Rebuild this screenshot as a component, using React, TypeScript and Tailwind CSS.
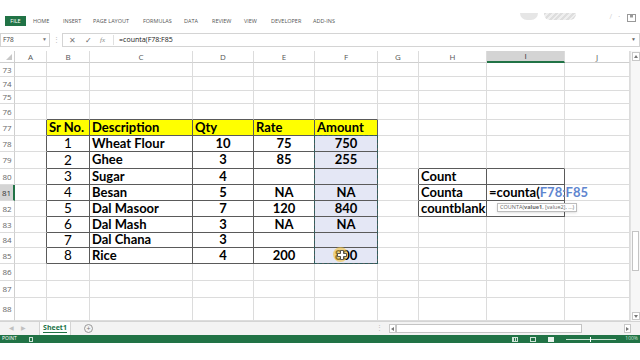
import React from "react"

const COLS = ["A", "B", "C", "D", "E", "F", "G", "H", "I", "J"]
const ROWS = [73, 74, 75, 76, 77, 78, 79, 80, 81, 82, 83, 84, 85, 86, 87, 88]

const items = [
  { sr: "1", desc: "Wheat Flour", qty: "10", rate: "75", amount: "750" },
  { sr: "2", desc: "Ghee", qty: "3", rate: "85", amount: "255" },
  { sr: "3", desc: "Sugar", qty: "4", rate: "", amount: "" },
  { sr: "4", desc: "Besan", qty: "5", rate: "NA", amount: "NA" },
  { sr: "5", desc: "Dal Masoor", qty: "7", rate: "120", amount: "840" },
  { sr: "6", desc: "Dal Mash", qty: "3", rate: "NA", amount: "NA" },
  { sr: "7", desc: "Dal Chana", qty: "3", rate: "", amount: "" },
  { sr: "8", desc: "Rice", qty: "4", rate: "200", amount: "800" },
]

const tabs = [
  { label: "HOME", w: "w-[30px]" },
  { label: "INSERT", w: "w-[30px]" },
  { label: "PAGE LAYOUT", w: "w-[50px]" },
  { label: "FORMULAS", w: "w-[41px]" },
  { label: "DATA", w: "w-[28px]" },
  { label: "REVIEW", w: "w-[32px]" },
  { label: "VIEW", w: "w-[27px]" },
  { label: "DEVELOPER", w: "w-[42px]" },
  { label: "ADD-INS", w: "w-[40px]" },
]

function cellContent(col: string, row: number) {
  if (row === 77 && ["B", "C", "D", "E", "F"].includes(col)) {
    const h: Record<string, string> = { B: "Sr No.", C: "Description", D: "Qty", E: "Rate", F: "Amount" }
    return <span className="pl-[2px] font-bold">{h[col]}</span>
  }
  if (row >= 78 && row <= 85) {
    const it = items[row - 78]
    if (col === "B") return <span className="w-full text-center text-[13.5px]">{it.sr}</span>
    if (col === "C") return <span className="pl-[2px] font-bold">{it.desc}</span>
    if (col === "D") return <span className="w-full text-center font-bold">{it.qty}</span>
    if (col === "E") return <span className="w-full text-center font-bold">{it.rate}</span>
    if (col === "F") return <span className="w-full text-center font-bold">{it.amount}</span>
  }
  if (col === "H") {
    if (row === 80) return <span className="pl-[2px] font-bold">Count</span>
    if (row === 81) return <span className="pl-[2px] font-bold">Counta</span>
    if (row === 82) return <span className="pl-[2px] font-bold">countblank</span>
  }
  if (col === "I" && row === 81) {
    return (
      <span className="pl-[2px] font-bold">
        =counta(<span className="text-[#5f86cf]">F78:F85</span>
      </span>
    )
  }
  return null
}

function Cell({ col, row }: { col: string; row: number }) {
  const ci = COLS.indexOf(col)
  const rightDark = (row >= 77 && row <= 85 && ci <= 5) || (row >= 80 && row <= 82 && ci >= 6 && ci <= 8)
  const bottomDark = (ci >= 1 && ci <= 5 && row >= 76 && row <= 85) || (ci >= 7 && ci <= 8 && row >= 79 && row <= 82)
  const yellow = row === 77 && ci >= 1 && ci <= 5
  const lavender = col === "F" && row >= 78 && row <= 85
  return (
    <div
      className={`flex items-center whitespace-nowrap border-r border-b text-[13px] text-black ${
        rightDark ? "border-r-[#5a5a5a]" : "border-r-[#dcdcdc]"
      } ${bottomDark ? "border-b-[#5a5a5a]" : "border-b-[#dcdcdc]"} ${
        yellow ? "bg-[#ffff00]" : lavender ? "bg-[#e4e7f5]" : ""
      }`}
    >
      {cellContent(col, row)}
    </div>
  )
}

function Sheet() {
  return (
    <div className="relative w-[630px] grid grid-cols-[15px_32px_43px_103px_61px_61px_63px_41px_68px_78px_65px] grid-rows-[12px_14px_14px_13px_16px_16px_16px_17px_16px_16px_16px_16px_15px_16px_17px_17px_23px] font-['Lato',sans-serif]">
      {/* corner */}
      <div className="relative border-r border-b border-[#cfcfcf]">
        <div className="absolute right-[2px] bottom-[2px] w-0 h-0 border-l-[6px] border-l-transparent border-b-[6px] border-b-[#c8c8c8]" />
      </div>
      {COLS.map((c) => (
        <div
          key={c}
          className={`flex items-center justify-center font-['Open_Sans',sans-serif] text-[8px] border-r border-r-[#dcdcdc] ${
            c === "I" ? "bg-[#d4d4d4] border-b-2 border-b-[#217346] text-[#333]" : "border-b border-b-[#cfcfcf] text-[#555]"
          }`}
        >
          {c}
        </div>
      ))}
      {ROWS.map((r) => (
        <React.Fragment key={r}>
          <div
            className={`flex items-center justify-center font-['Open_Sans',sans-serif] text-[8px] border-b border-b-[#dcdcdc] ${
              r === 81 ? "bg-[#d4d4d4] border-r-2 border-r-[#217346] text-[#333]" : "border-r border-r-[#cfcfcf] text-[#666]"
            }`}
          >
            {r}
          </div>
          {COLS.map((c) => (
            <Cell key={c + r} col={c} row={r} />
          ))}
        </React.Fragment>
      ))}

      {/* copy selection marching ants */}
      <div className="absolute left-[314px] top-[84px] w-[64px] h-[129px] border border-dashed border-[#2f5e5e]" />

      {/* function tooltip */}
      <div className="absolute left-[497px] top-[152px] h-[9px] px-[2px] flex items-center bg-white border border-[#bdbdbd] shadow-sm font-['Open_Sans',sans-serif] text-[5.5px] text-[#666] whitespace-nowrap">
        COUNTA(<span className="font-bold">value1</span>, [value2], ...)
      </div>

      {/* cursor highlight */}
      <div className="absolute left-[333px] top-[196px] w-[15px] h-[15px] rounded-full bg-[#f2c23a]/60" />
      <svg className="absolute left-[337px] top-[199px]" width="10" height="10" viewBox="0 0 10 10">
        <path d="M3.5 0.5h3v3h3v3h-3v3h-3v-3h-3v-3h3z" fill="#fff" stroke="#333" strokeWidth="0.8" />
      </svg>
    </div>
  )
}

function VScroll() {
  return (
    <div className="w-[10px] flex flex-col items-center bg-[#f7f7f7] border-l border-[#e2e2e2]">
      <div className="mt-[1px] w-[8px] h-[9px] border border-[#c8c8c8] bg-white flex items-center justify-center">
        <div className="w-0 h-0 border-l-[2px] border-r-[2px] border-b-[3px] border-l-transparent border-r-transparent border-b-[#777]" />
      </div>
      <div className="h-[170px]" />
      <div className="w-[7px] h-[40px] bg-white border border-[#c4c4c4]" />
      <div className="flex-1" />
      <div className="mb-[1px] w-[8px] h-[8px] border border-[#c8c8c8] bg-white flex items-center justify-center">
        <div className="w-0 h-0 border-l-[2px] border-r-[2px] border-t-[3px] border-l-transparent border-r-transparent border-t-[#777]" />
      </div>
    </div>
  )
}

export default function App() {
  return (
    <div className="w-[640px] h-[360px] bg-white flex flex-col overflow-hidden font-['Open_Sans',sans-serif]">
      <div className="h-[14px]" />

      {/* ribbon tabs */}
      <div className="h-[14px] flex items-center relative">
        <div className="ml-[5px] w-[21px] h-[10px] bg-[#217346] text-white text-[5.5px] flex items-center justify-center">FILE</div>
        <div className="ml-[7px] flex items-center">
          {tabs.map((t) => (
            <div key={t.label} className={`${t.w} text-[5.5px] text-[#555] whitespace-nowrap`}>
              {t.label}
            </div>
          ))}
        </div>
        <div className="absolute right-0 top-[-1px] flex items-start gap-[6px] pr-[3px]">
          <div className="w-[18px] h-[7px] rounded-b-full bg-[#e6e6e6]" />
          <div className="w-[32px] h-[7px] bg-[repeating-linear-gradient(135deg,#dedede_0_2px,#efefef_2px_4px)] rounded-b-[6px]" />
          <div className="ml-[28px] text-[7px] text-[#cfcfcf] leading-none">/</div>
          <div className="text-[7px] text-[#aaa] leading-none">·</div>
          <svg width="11" height="10" viewBox="0 0 11 10">
            <rect x="1.5" y="1.5" width="8" height="7" fill="none" stroke="#999" />
            <rect x="4" y="1.5" width="3" height="3" fill="#999" />
          </svg>
        </div>
      </div>

      <div className="h-[5px]" />

      {/* formula bar */}
      <div className="h-[14px] flex items-stretch text-[6.5px] text-[#444]">
        <div className="w-[50px] border border-[#d4d4d4] flex items-center justify-between px-[2px]">
          <span>F78</span>
          <span className="text-[5px] text-[#777]">▼</span>
        </div>
        <div className="w-[12px] flex items-center justify-center text-[#bbb] text-[7px]">⋮</div>
        <div className="flex-1 border border-[#d4d4d4] flex items-center">
          <span className="ml-[6px] text-[8px] text-[#777]">✕</span>
          <span className="ml-[9px] text-[8px] text-[#666]">✓</span>
          <span className="ml-[8px] italic font-['Liberation_Serif',serif] text-[7px] text-[#888]">fx</span>
          <div className="ml-[8px] w-px h-[10px] bg-[#e0e0e0]" />
          <span className="ml-[5px] text-[7px] text-[#222]">=counta(F78:F85</span>
          <span className="ml-auto mr-[3px] text-[5px] text-[#666]">▼</span>
        </div>
      </div>

      <div className="h-[4px]" />

      <div className="h-[270px] flex overflow-hidden">
        <Sheet />
        <VScroll />
      </div>

      {/* sheet tabs */}
      <div className="h-[14px] flex items-center bg-[#f3f3f3] border-t border-[#d4d4d4] text-[7px]">
        <span className="ml-[9px] text-[6px] text-[#c0c0c0]">◀</span>
        <span className="ml-[7px] text-[6px] text-[#c0c0c0]">▶</span>
        <div className="ml-[13px] w-[32px] h-full bg-white flex items-center justify-center border-x border-[#d4d4d4]">
          <span className="font-bold text-[#217346] border-b border-[#217346] leading-[8px]">Sheet1</span>
        </div>
        <div className="ml-[13px] w-[9px] h-[9px] rounded-full border border-[#999] flex items-center justify-center text-[7px] leading-none text-[#777]">+</div>
        <div className="ml-[283px] text-[#bbb] text-[7px]">⋮</div>
        <div className="ml-[6px] w-[7px] h-[9px] border border-[#c8c8c8] bg-white flex items-center justify-center">
          <div className="w-0 h-0 border-t-[2px] border-b-[2px] border-r-[3px] border-t-transparent border-b-transparent border-r-[#777]" />
        </div>
        <div className="w-[186px] h-[9px] bg-white border border-[#c4c4c4]" />
        <div className="flex-1" />
        <div className="mr-[9px] w-[7px] h-[9px] border border-[#c8c8c8] bg-white flex items-center justify-center">
          <div className="w-0 h-0 border-t-[2px] border-b-[2px] border-l-[3px] border-t-transparent border-b-transparent border-l-[#777]" />
        </div>
      </div>

      {/* status bar */}
      <div className="h-[8px] bg-[#217346] flex items-center text-white text-[5px]">
        <span className="ml-[2px]">POINT</span>
        <div className="ml-[12px] w-[4px] h-[5px] border border-[#cde3d6]" />
        <div className="ml-auto flex items-center">
          <div className="w-[6px] h-[5px] border border-[#cde3d6] bg-[repeating-linear-gradient(90deg,#cde3d6_0_1px,transparent_1px_2px)]" />
          <div className="ml-[12px] w-[6px] h-[5px] border border-[#cde3d6]" />
          <div className="ml-[12px] w-[6px] h-[5px] bg-[#e8f2ec]" />
          <div className="ml-[12px] relative w-[50px] h-px bg-[#cde3d6]">
            <div className="absolute left-[24px] top-[-2px] w-px h-[5px] bg-white" />
          </div>
          <span className="ml-[9px] mr-[2px] text-[#cde3d6]">100%</span>
        </div>
      </div>

      <div className="flex-1 bg-white" />
    </div>
  )
}
